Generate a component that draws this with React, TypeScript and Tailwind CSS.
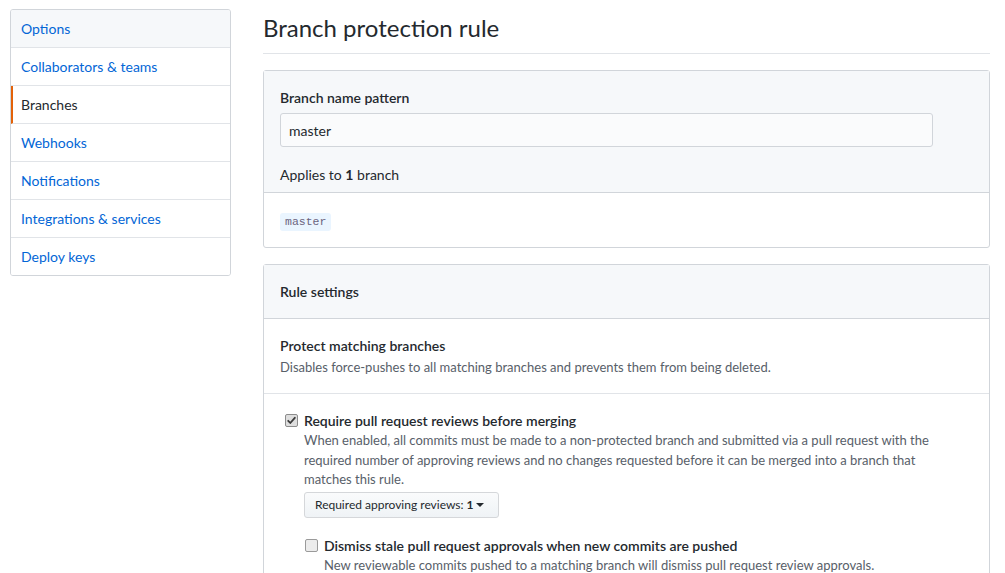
import type { ReactNode } from "react";

const NAV = [
  { label: "Options", active: false, shaded: true },
  { label: "Collaborators & teams", active: false, shaded: false },
  { label: "Branches", active: true, shaded: false },
  { label: "Webhooks", active: false, shaded: false },
  { label: "Notifications", active: false, shaded: false },
  { label: "Integrations & services", active: false, shaded: false },
  { label: "Deploy keys", active: false, shaded: false },
];

function Checkbox({ checked }: { checked: boolean }) {
  return (
    <span
      className={
        checked
          ? "flex h-[13px] w-[13px] shrink-0 items-center justify-center rounded-[2px] border border-[#8c8c8c] bg-[#dedede]"
          : "flex h-[13px] w-[13px] shrink-0 items-center justify-center rounded-[2px] border border-[#9a9a9a] bg-[#ececec]"
      }
    >
      {checked && (
        <svg viewBox="0 0 11 11" className="h-[11px] w-[11px]" aria-hidden="true">
          <path
            d="M2.2 5.8 4.3 8 8.8 2.8"
            fill="none"
            stroke="#3b3b3b"
            strokeWidth="1.8"
            strokeLinecap="round"
            strokeLinejoin="round"
          />
        </svg>
      )}
    </span>
  );
}

function Option({
  checked,
  title,
  children,
}: {
  checked: boolean;
  title: string;
  children: ReactNode;
}) {
  return (
    <div className="flex items-start">
      <div className="flex h-[21px] w-[24px] shrink-0 items-center justify-start pl-[5px]">
        <Checkbox checked={checked} />
      </div>
      <div className="min-w-0 flex-1">
        <div className="text-[14px] font-semibold leading-[21px] text-[#24292e]">{title}</div>
        {children}
      </div>
    </div>
  );
}

export default function App() {
  return (
    <div className="flex h-[573px] w-[1005px] overflow-hidden bg-white font-['Lato','Liberation_Sans',sans-serif] text-[#24292e]">
      {/* left settings menu */}
      <div className="w-[263px] shrink-0 pl-[10px] pt-[9px]">
        <nav className="w-[221px] overflow-hidden rounded-[3px] border border-[#d1d5da]">
          {NAV.map((item, i) => (
            <div
              key={item.label}
              className={[
                "flex items-center text-[14px]",
                i === NAV.length - 1 ? "h-[37px]" : "h-[38px] border-b border-[#e1e4e8]",
                item.shaded ? "bg-[#f6f8fa]" : "bg-white",
                item.active
                  ? "border-l-2 border-l-[#e36209] pl-[8px] text-[#24292e]"
                  : "pl-[10px] text-[#0366d6]",
              ].join(" ")}
            >
              {item.label}
            </div>
          ))}
        </nav>
      </div>

      {/* main column */}
      <main className="w-[727px] shrink-0">
        <h1 className="mt-[13px] border-b border-[#e1e4e8] pb-[10px] text-[24px] font-normal leading-[30px] text-[#24292e]">
          Branch protection rule
        </h1>

        <section className="mt-[16px] rounded-[3px] border border-[#d1d5da]">
          <div className="border-b border-[#d1d5da] bg-[#f6f8fa] px-[16px] pb-[7px] pt-[16px]">
            <div className="mb-[5px] text-[14px] font-semibold leading-[21px]">Branch name pattern</div>
            <div className="flex h-[34px] w-[653px] items-center rounded-[3px] border border-[#d1d5da] bg-[#fafbfc] px-[8px] text-[14px]">
              master
            </div>
            <div className="mt-[17px] text-[14px] leading-[21px]">
              Applies to <span className="font-bold">1</span> branch
            </div>
          </div>
          <div className="flex px-[16px] pb-[16px] pt-[20px]">
            <code className="flex h-[18px] items-center rounded-[3px] bg-[#eaf5ff] px-[5px] font-['Liberation_Mono',monospace] text-[11.5px] text-[#6a6480]">
              master
            </code>
          </div>
        </section>

        <section className="mt-[16px] rounded-[3px] border border-[#d1d5da]">
          <div className="border-b border-[#d1d5da] bg-[#f6f8fa] px-[16px] py-[16px] text-[14px] font-semibold leading-[21px]">
            Rule settings
          </div>
          <div className="border-b border-[#e1e4e8] px-[16px] pb-[16px] pt-[16px]">
            <div className="text-[14px] font-semibold leading-[21px]">Protect matching branches</div>
            <p className="mt-[1px] text-[13px] leading-[20px] text-[#586069]">
              Disables force-pushes to all matching branches and prevents them from being deleted.
            </p>
          </div>
          <div className="px-[16px] pt-[16px]">
            <Option checked title="Require pull request reviews before merging">
              <p className="whitespace-nowrap text-[13px] leading-[19.5px] text-[#586069]">
                When enabled, all commits must be made to a non-protected branch and submitted via a pull request with the
                <br />
                required number of approving reviews and no changes requested before it can be merged into a branch that
                <br />
                matches this rule.
              </p>
              <button
                type="button"
                className="mt-[2px] inline-flex h-[26px] w-[195px] items-center rounded-[3px] border border-[#d5d7da] bg-gradient-to-b from-[#fafbfc] to-[#eff3f6] px-[10px] text-[12px] text-[#24292e]"
              >
                Required approving reviews:&nbsp;<span className="font-bold">1</span>
                <svg viewBox="0 0 8 4" className="ml-[2px] h-[4px] w-[8px]" aria-hidden="true">
                  <path d="M0 0h8L4 4z" fill="#24292e" />
                </svg>
              </button>

              <div className="mt-[17px] -ml-[4px]">
                <Option checked={false} title="Dismiss stale pull request approvals when new commits are pushed">
                  <p className="text-[13px] leading-[19.5px] text-[#586069]">
                    New reviewable commits pushed to a matching branch will dismiss pull request review approvals.
                  </p>
                </Option>
              </div>
            </Option>
          </div>
        </section>
      </main>
    </div>
  );
}
